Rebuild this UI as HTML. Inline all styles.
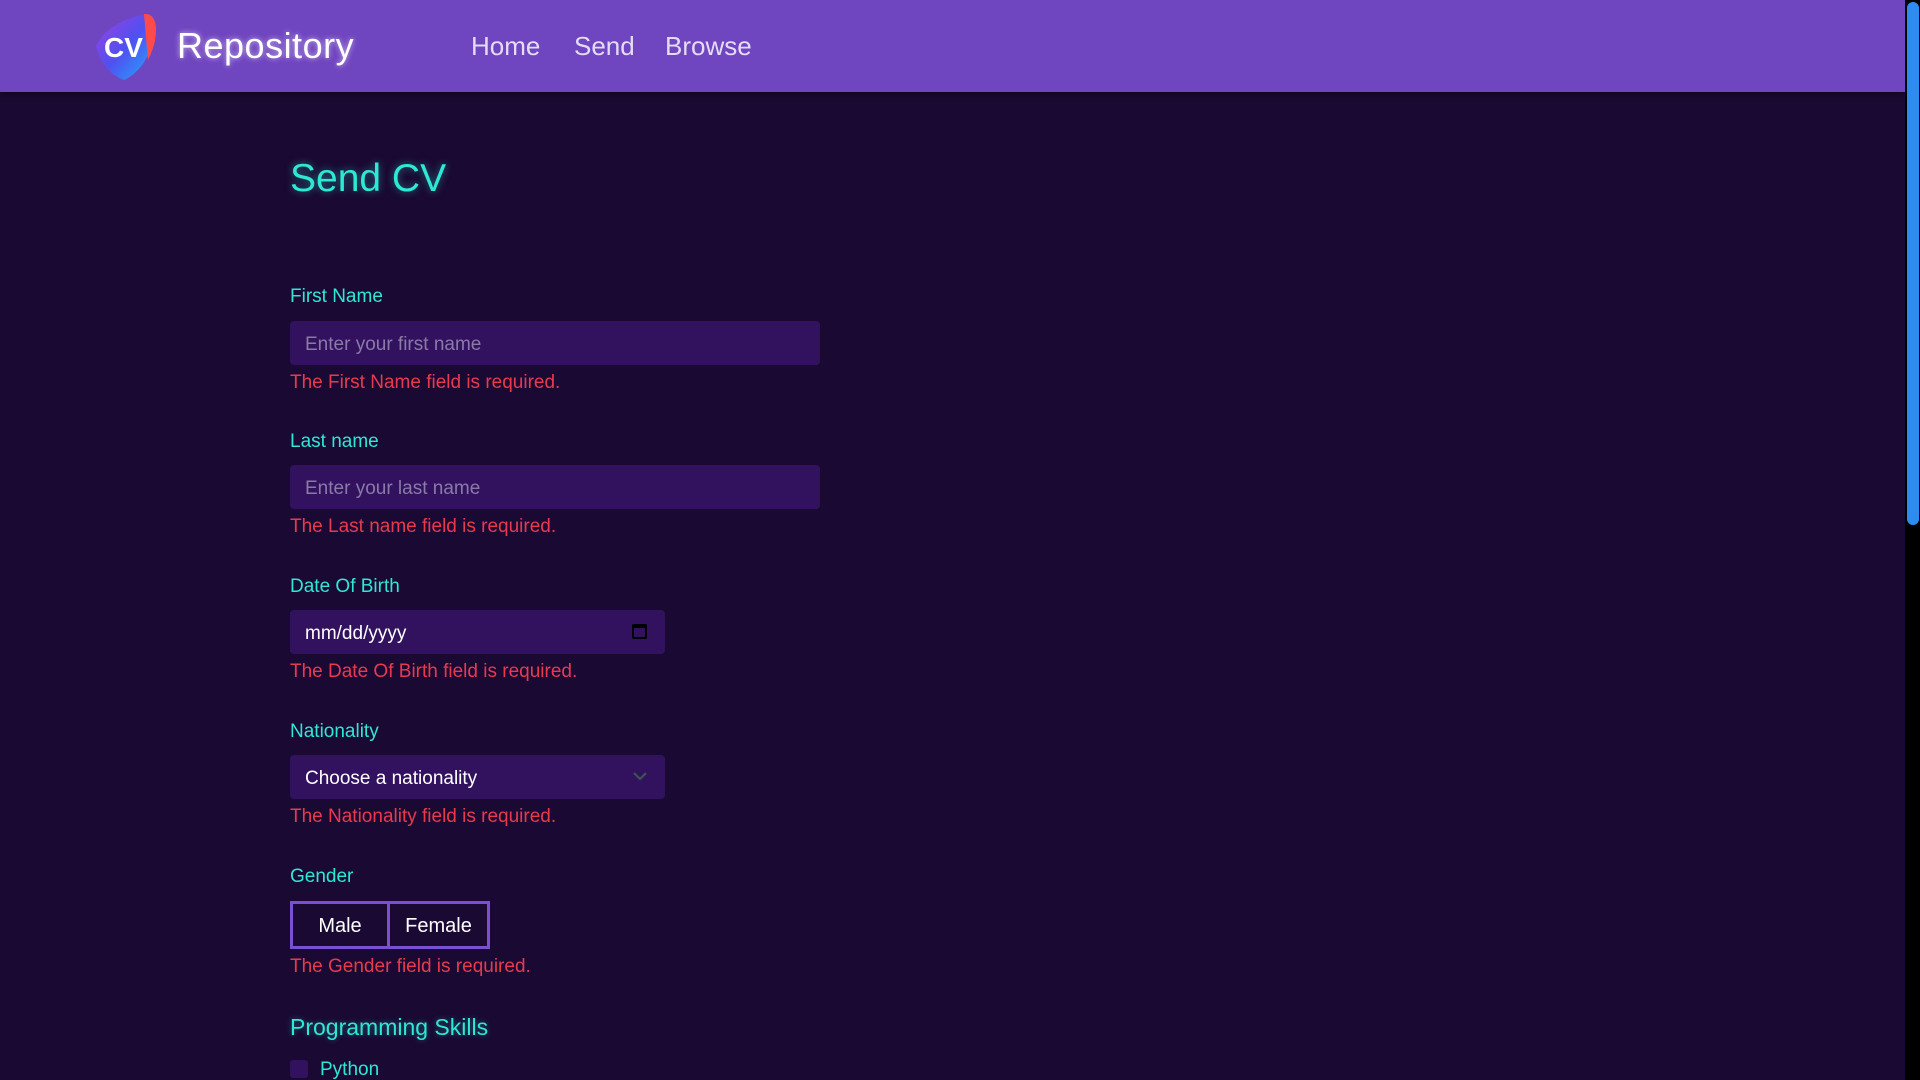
<!DOCTYPE html>
<html><head><style>
*{box-sizing:border-box;margin:0;padding:0}
html,body{width:1920px;height:1080px;overflow:hidden}
body{background:#1a0933;font-family:"Liberation Sans",sans-serif;position:relative}
.hdr{position:absolute;left:0;top:0;width:1905px;height:92px;background:#7045c0;box-shadow:0 2px 6px rgba(0,0,0,.4)}
.brand{position:absolute;left:177px;top:25px;font-size:36px;color:#fff;font-weight:normal;letter-spacing:0.5px;text-shadow:0 0 6px rgba(255,255,255,.6)}
.nav{position:absolute;top:31px;font-size:26px;color:#e4dcf5}
.sb{position:absolute;right:0;top:0;width:15px;height:1080px;background:#000}
.thumb{position:absolute;right:1px;top:2px;width:12px;height:523px;background:#2e8cf0;border-radius:6px}
.a{position:absolute;left:290px}
h1{position:absolute;left:290px;top:157px;font-size:39px;color:#2ee8d4;font-weight:normal;text-shadow:0 0 8px rgba(46,232,212,.5)}
.lbl{font-size:19px;color:#2ee8d4}
.in{height:44px;background:#32125e;border-radius:4px;font-size:19px;color:#8a7aa8;padding:13px 15px 0}
.err{font-size:19px;color:#e83a4e}
.btn{position:absolute;top:901px;height:48px;border:3px solid #7a4fd0;font-size:20px;color:#fff;text-align:center;line-height:44px;background:#1a0933}
</style></head><body>
<div class="hdr">
<svg style="position:absolute;left:94px;top:12px" width="66" height="70" viewBox="0 0 66 70">
<defs><linearGradient id="g" x1="0" y1="0" x2="1" y2="1"><stop offset="0" stop-color="#a040e0"/><stop offset=".5" stop-color="#5050f0"/><stop offset="1" stop-color="#20b0ff"/></linearGradient></defs>
<path d="M52 2C30 6 8 18 2 34C6 52 18 64 30 68C48 60 58 40 62 18C62 8 58 2 52 2Z" fill="url(#g)"/>
<path d="M52 2C58 2 62 8 62 18C62 30 58 40 54 48L50 2Z" fill="#ff4a4a"/>
<text x="10" y="45" font-family="Liberation Sans" font-weight="bold" font-size="28" fill="#fff">CV</text>
</svg>
<div class="brand">Repository</div>
<div class="nav" style="left:471px">Home</div>
<div class="nav" style="left:574px">Send</div>
<div class="nav" style="left:665px">Browse</div>
</div>
<div class="sb"><div class="thumb"></div></div>
<h1>Send CV</h1>
<div class="a lbl" style="top:286px">First Name</div>
<div class="a in" style="top:321px;width:530px">Enter your first name</div>
<div class="a err" style="top:372px">The First Name field is required.</div>
<div class="a lbl" style="top:431px">Last name</div>
<div class="a in" style="top:465px;width:530px">Enter your last name</div>
<div class="a err" style="top:516px">The Last name field is required.</div>
<div class="a lbl" style="top:576px">Date Of Birth</div>
<div class="a in" style="top:610px;width:375px;color:#fff">mm/dd/yyyy<span style="position:absolute;right:18px;top:14px;width:15px;height:15px;border:2px solid #000;border-top-width:4px;border-radius:2px"></span></div>
<div class="a err" style="top:661px">The Date Of Birth field is required.</div>
<div class="a lbl" style="top:721px">Nationality</div>
<div class="a in" style="top:755px;width:375px;color:#fff">Choose a nationality<svg style="position:absolute;right:18px;top:17px" width="14" height="9"><path d="M1 1L7 7L13 1" stroke="#3a5a50" stroke-width="2" fill="none"/></svg></div>
<div class="a err" style="top:806px">The Nationality field is required.</div>
<div class="a lbl" style="top:866px">Gender</div>
<div class="btn" style="left:290px;width:100px">Male</div>
<div class="btn" style="left:387px;width:103px">Female</div>
<div class="a err" style="top:956px">The Gender field is required.</div>
<div class="a lbl" style="top:1014px;font-size:23px;text-shadow:0 0 6px rgba(46,232,212,.4)">Programming Skills</div>
<div class="a" style="top:1060px;width:18px;height:18px;background:#32125e;border-radius:3px"></div>
<div class="lbl" style="position:absolute;left:320px;top:1059px">Python</div>
</body></html>
